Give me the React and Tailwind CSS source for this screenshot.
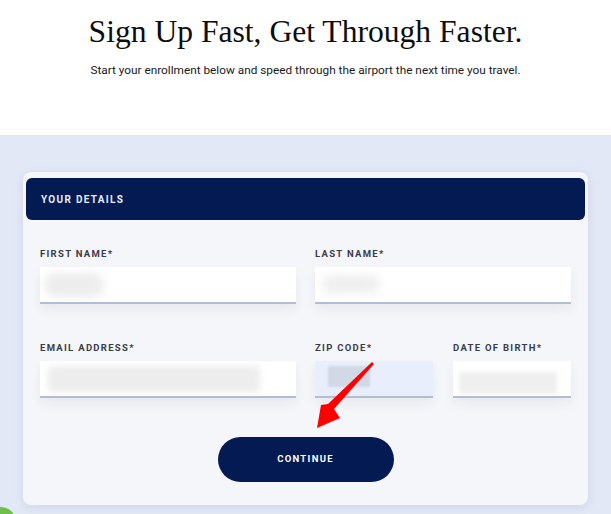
import React from "react";

const labelCls =
  "block text-[9.5px] leading-[12px] font-bold tracking-[1.3px] text-[#3b3b4a] mb-[7px]";
const inputCls =
  "relative h-[37px] bg-white border-b-2 border-[#b4bdd6] shadow-[0_6px_12px_rgba(30,40,90,0.06)] overflow-hidden";

function Field({ label, className = "", inputClass = "", children }) {
  return (
    <div className={className}>
      <label className={labelCls}>{label}</label>
      <div className={`${inputCls} ${inputClass}`}>{children}</div>
    </div>
  );
}

export default function App() {
  return (
    <div
      className="relative w-[611px] h-[514px] overflow-hidden bg-[#e3e8f6]"
      style={{ fontFamily: "Roboto, 'Liberation Sans', sans-serif" }}
    >
      {/* Hero */}
      <div className="bg-white h-[135px] pt-[13px] text-center">
        <h1
          className="text-[31.6px] leading-[38px] text-[#0d0d0d]"
          style={{ fontFamily: "'Liberation Serif', 'DejaVu Serif', serif" }}
        >
          Sign Up Fast, Get Through Faster.
        </h1>
        <p className="mt-[12px] text-[11.8px] leading-[14px] text-[#1a1a1a]">
          Start your enrollment below and speed through the airport the next time you travel.
        </p>
      </div>

      {/* Card */}
      <div className="pt-[37px] px-[23px]">
        <div className="bg-[#f5f6f9] rounded-[8px] shadow-[0_2px_10px_rgba(60,80,150,0.12)] pt-[6px] px-[3px] pb-[23px]">
          <div className="bg-[#041a52] rounded-[6px] h-[42px] flex items-center px-[15px]">
            <span className="text-[10px] font-bold tracking-[1.3px] text-[#e6edff]">YOUR DETAILS</span>
          </div>

          <div className="px-[14px] pt-[28px]">
            <div className="grid grid-cols-2 gap-x-[19px] gap-y-[38px]">
              <Field label="FIRST NAME*">
                <div className="absolute left-[4px] top-[6px] w-[60px] h-[24px] rounded-full bg-[#ededed] blur-[4px]" />
              </Field>
              <Field label="LAST NAME*">
                <div className="absolute left-[7px] top-[8px] w-[58px] h-[18px] rounded-full bg-[#efefef] blur-[4px]" />
              </Field>
              <Field label="EMAIL ADDRESS*">
                <div className="absolute left-[8px] top-[5px] w-[212px] h-[26px] rounded-[4px] bg-[#ededed] blur-[3px]" />
              </Field>
              <div className="grid grid-cols-2 gap-x-[20px]">
                <Field label="ZIP CODE*" inputClass="!bg-[#e8eefc]">
                  <div className="absolute left-[13px] top-[5px] w-[42px] h-[21px] bg-[#d3d8e6] blur-[1px]" />
                </Field>
                <Field label="DATE OF BIRTH*">
                  <div className="absolute left-[6px] top-[11px] w-[98px] h-[22px] bg-[#efefef] blur-[2px]" />
                </Field>
              </div>
            </div>

            <div className="flex justify-center mt-[39px]">
              <button className="w-[176px] h-[45px] rounded-full bg-[#041a52] text-white text-[9.5px] font-bold tracking-[1.3px]">
                CONTINUE
              </button>
            </div>
          </div>
        </div>
      </div>

      {/* annotation arrow */}
      <svg className="absolute left-0 top-0 pointer-events-none" width="611" height="514">
        <polygon
          points="372,362 374,364 334,409 340,418 317,428 321,405 328,404"
          fill="#ff0000"
        />
      </svg>

      {/* chat bubble peeking in */}
      <div className="absolute left-[-14px] top-[507px] w-[30px] h-[30px] rounded-full bg-[#6fbf4a]" />
    </div>
  );
}
